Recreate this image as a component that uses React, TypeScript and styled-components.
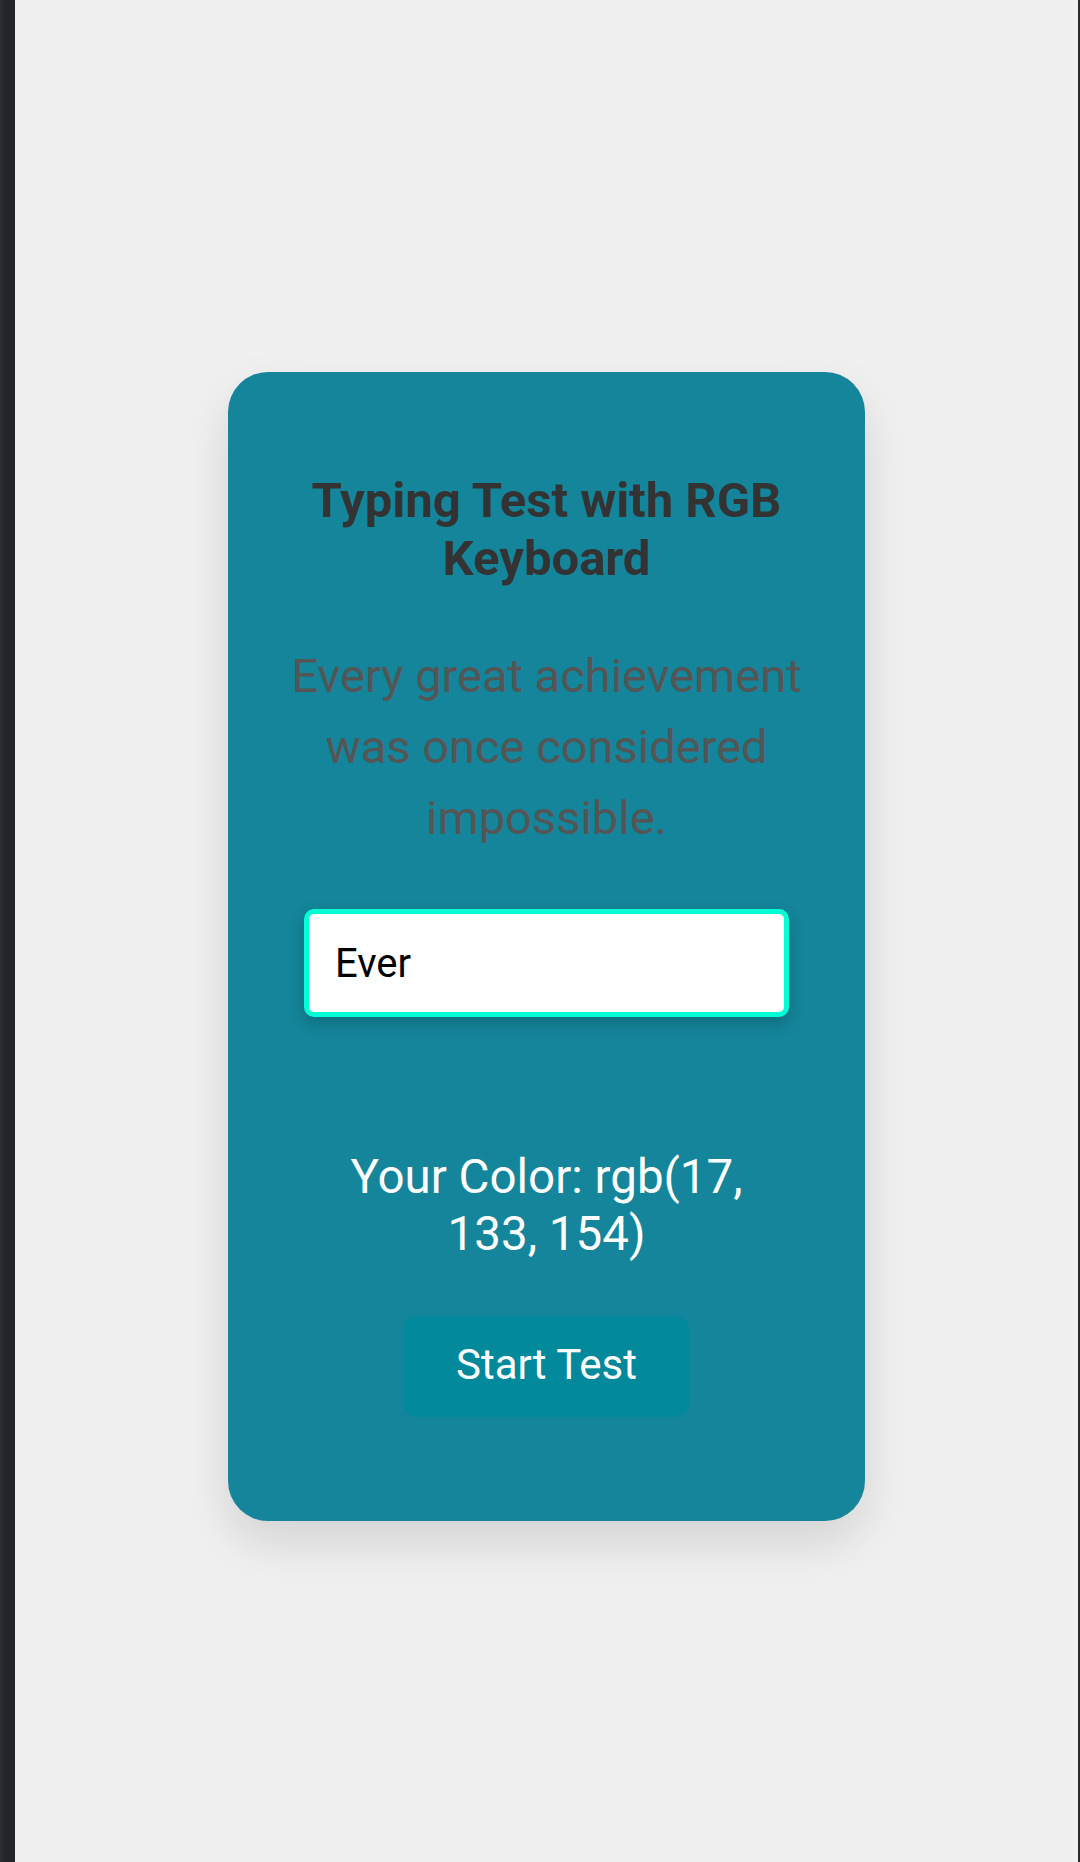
import React, { useState } from "react";
import styled, { createGlobalStyle } from "styled-components";

const GlobalStyle = createGlobalStyle`
  html, body {
    margin: 0;
    padding: 0;
    background: #22252a;
  }
  * { box-sizing: border-box; }
`;

const Frame = styled.div`
  display: flex;
  width: 1080px;
  height: 1862px;
  background: #22252a;
  overflow: hidden;
`;

const EdgeStrip = styled.div<{ $w: number; $color: string }>`
  flex: 0 0 ${(p) => p.$w}px;
  background: ${(p) => p.$color};
`;

const Page = styled.main`
  flex: 1;
  display: flex;
  justify-content: center;
  align-items: flex-start;
  padding-top: 372px;
  background: #f0f0f0;
  font-family: Roboto, "Liberation Sans", Arial, sans-serif;
`;

const Card = styled.section<{ $bg: string }>`
  width: 637px;
  height: 1149px;
  background: ${(p) => p.$bg};
  border-radius: 40px;
  box-shadow: 0 22px 48px rgba(0, 0, 0, 0.12);
  padding: 100px 48px 0;
  display: flex;
  flex-direction: column;
  align-items: center;
  text-align: center;
`;

const Title = styled.h1`
  margin: 0;
  font-size: 49px;
  line-height: 58px;
  font-weight: 700;
  color: #333333;
`;

const Quote = styled.p`
  margin: 52px 0 0;
  font-size: 47px;
  line-height: 71px;
  font-weight: 400;
  color: #555555;
  max-width: 541px;
`;

const TypeInput = styled.input`
  margin-top: 56px;
  width: 485px;
  height: 108px;
  padding: 0 26px;
  border: 5px solid #00ffd5;
  border-radius: 10px;
  background: #ffffff;
  color: #000000;
  font-family: Roboto, "Liberation Sans", Arial, sans-serif;
  font-size: 40px;
  outline: none;
  box-shadow: 0 6px 16px rgba(0, 0, 0, 0.2);
`;

const ColorText = styled.p`
  margin: 132px 0 0;
  max-width: 470px;
  font-size: 47.5px;
  line-height: 57px;
  color: #ffffff;
`;

const StartButton = styled.button`
  margin-top: 53px;
  width: 285px;
  height: 101px;
  padding: 0 0 4px;
  border: none;
  border-radius: 12px;
  background: #02899b;
  color: #ffffff;
  font-family: Roboto, "Liberation Sans", Arial, sans-serif;
  font-size: 42px;
  cursor: pointer;
`;

export default function App() {
  const [text, setText] = useState("Ever");
  const color = "rgb(17, 133, 154)";
  return (
    <>
      <GlobalStyle />
      <Frame>
        <EdgeStrip $w={3} $color="#2b2b2d" />
        <EdgeStrip $w={12} $color="#22252a" />
        <Page>
          <Card $bg="#14859a">
            <Title>Typing Test with RGB Keyboard</Title>
            <Quote>Every great achievement was once considered impossible.</Quote>
            <TypeInput value={text} onChange={(e) => setText(e.target.value)} />
            <ColorText>{`Your Color: ${color}`}</ColorText>
            <StartButton>Start Test</StartButton>
          </Card>
        </Page>
        <EdgeStrip $w={2} $color="#2b2b2d" />
      </Frame>
    </>
  );
}
